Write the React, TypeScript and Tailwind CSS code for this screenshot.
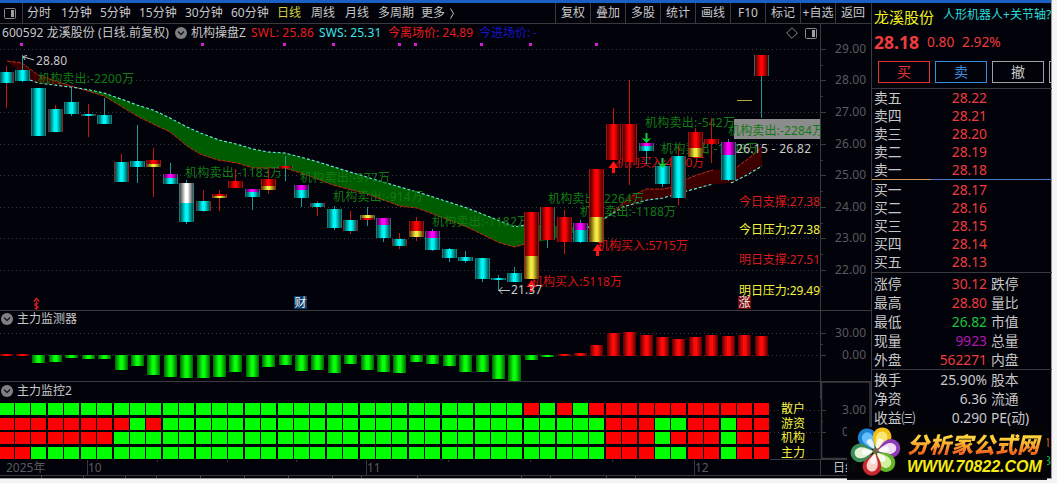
import clsx from "clsx";

type Tone = "r" | "c" | "y" | "m" | "w";
// wick top, wick bottom, wick colour, body segments [tone, top, bottom]
type Candle = [number, number, "r" | "c", [Tone, number, number][]];

const FONT = "font-['Noto_Sans','Noto_Sans_CJK_SC',sans-serif]";

const RED = "#c81414";
const TEAL = "#1e9696";
const GRID = "#3c3c40";
const LINE = "#3a3a3e";

const tones: Record<Tone, [string, string]> = {
  r: ["#4c0000", "#ff0404"],
  c: ["#004c4c", "#00f4f4"],
  y: ["#5e4c0c", "#f4e83c"],
  m: ["#4c004c", "#ff00ff"],
  w: ["#4c4c4c", "#ffffff"],
};

const candles: Candle[] = [
  [66, 108, "r", [["c", 72, 83]]],
  [55, 82, "c", [["c", 70, 81]]],
  [88, 136, "c", [["c", 88, 136]]],
  [105, 132, "r", [["c", 109, 132]]],
  [88, 116, "c", [["c", 102, 114]]],
  [104, 137, "r", [["c", 114, 116]]],
  [98, 124, "c", [["c", 115, 124]]],
  [154, 182, "r", [["c", 162, 182]]],
  [125, 183, "c", [["c", 161, 167]]],
  [148, 197, "r", [["r", 160, 164], ["y", 164, 167]]],
  [163, 184, "c", [["m", 174, 178], ["c", 178, 184]]],
  [180, 224, "c", [["w", 183, 203], ["c", 203, 222]]],
  [190, 212, "r", [["c", 201, 211]]],
  [190, 211, "r", [["r", 194, 196], ["y", 196, 198]]],
  [169, 188, "r", [["r", 181, 188]]],
  [189, 210, "c", [["m", 189, 192], ["c", 192, 197]]],
  [170, 194, "r", [["r", 179, 186], ["y", 186, 190]]],
  [156, 181, "c", [["r", 166, 168]]],
  [185, 207, "c", [["m", 185, 190], ["c", 190, 198]]],
  [201, 216, "r", [["c", 203, 207]]],
  [206, 230, "c", [["c", 209, 228]]],
  [211, 234, "r", [["c", 220, 231]]],
  [207, 226, "c", [["y", 215, 218], ["r", 218, 220]]],
  [218, 242, "c", [["m", 218, 225], ["c", 225, 238]]],
  [233, 249, "r", [["c", 239, 246]]],
  [217, 241, "r", [["r", 221, 231], ["y", 231, 237]]],
  [229, 251, "c", [["m", 231, 238], ["c", 238, 250]]],
  [248, 262, "c", [["c", 249, 258]]],
  [251, 263, "c", [["c", 257, 261]]],
  [258, 282, "c", [["c", 258, 279]]],
  [275, 291, "c", [["c", 278, 280]]],
  [267, 282, "c", [["c", 273, 282]]],
  [212, 279, "r", [["r", 212, 256], ["y", 256, 279]]],
  [207, 248, "c", [["r", 207, 240]]],
  [210, 254, "r", [["r", 217, 242]]],
  [220, 243, "c", [["m", 223, 230], ["c", 230, 242]]],
  [169, 242, "r", [["r", 169, 217], ["y", 217, 242]]],
  [108, 160, "r", [["r", 124, 160]]],
  [80, 185, "r", [["r", 124, 162]]],
  [142, 164, "c", [["m", 143, 146], ["c", 146, 151]]],
  [164, 187, "c", [["c", 166, 184]]],
  [146, 205, "r", [["c", 156, 198]]],
  [128, 157, "r", [["r", 132, 148], ["y", 148, 157]]],
  [118, 163, "r", [["r", 139, 144]]],
  [139, 181, "c", [["m", 142, 155], ["c", 155, 180]]],
  [100, 100, "r", []],
  [55, 118, "c", [["r", 55, 76]]],
];

const centerOf = (i: number) => Math.floor(6.15 + 16.41 * i) + 0.5;

const priceAxis: [string, number][] = [
  ["29.00", 49], ["28.00", 80], ["27.00", 112], ["26.00", 144],
  ["25.00", 175], ["24.00", 207], ["23.00", 238], ["22.00", 270],
];

const signalDots = [21, 202, 284, 333, 399, 415, 481, 530, 596];

const sellLabels: [number, number, string, number][] = [
  [38, 83, "-2200万", 96],
  [185, 177, "-1183万", 97],
  [300, 182, "-977万", 90],
  [333, 201, "-914万", 90],
  [432, 226, "-1182万", 97],
  [548, 203, "-2264万", 96],
  [580, 216, "-1188万", 96],
  [645, 127, "-542万", 90],
  [661, 153, "-1198万", 97],
];

const buyLabels: [number, number, string, number][] = [
  [531, 286, "5118万", 91],
  [597, 250, "5715万", 91],
  [616, 167, "4180万", 88],
];

const targets: [string, number, string][] = [
  ["今日支撑:27.38", 206, "#d81c1c"],
  ["今日压力:27.38", 234, "#f4f43c"],
  ["明日支撑:27.51", 264, "#d81c1c"],
  ["明日压力:29.49", 295, "#f4f43c"],
];

// free end of every bar: the top above zero, the bottom below it
const histogram = [
  354, 354, 363, 362, 358, 359, 359, 370, 366, 375, 377, 378, 378, 377, 372, 377,
  367, 365, 371, 370, 373, 364, 370, 372, 373, 362, 364, 366, 372, 372, 379, 381,
  360, 357, 354, 353, 345, 333, 332, 335, 337, 339, 337, 335, 336, 335, 336,
];

const heatRows: [string, number, string][] = [
  ["散户", 403, "G".repeat(32) + "RGRG" + "R".repeat(11)],
  ["游资", 418, "RRRRRRRRGR" + "G".repeat(27) + "RRRGGRRGRR"],
  ["机构", 432, "R".repeat(7) + "G".repeat(30) + "RRRGRRRGRR"],
  ["主力", 447, "RR" + "G".repeat(35) + "RRRGGRRGRR"],
];

const periods = [
  { text: "分时", width: "w-[34px]" },
  { text: "1分钟", width: "w-[39px]" },
  { text: "5分钟", width: "w-[39px]" },
  { text: "15分钟", width: "w-[46px]" },
  { text: "30分钟", width: "w-[46px]" },
  { text: "60分钟", width: "w-[46px]" },
  { text: "日线", width: "w-[34px]", active: true },
  { text: "周线", width: "w-[34px]" },
  { text: "月线", width: "w-[33px]" },
  { text: "多周期", width: "w-[43px]" },
  { text: "更多", width: "w-[28px]" },
];

const tools = ["复权", "叠加", "多股", "统计", "画线", "F10", "标记", "+自选", "返回"];

const asks = [["卖五", "28.22"], ["卖四", "28.21"], ["卖三", "28.20"], ["卖二", "28.19"], ["卖一", "28.18"]];
const bids = [["买一", "28.17"], ["买二", "28.16"], ["买三", "28.15"], ["买四", "28.14"], ["买五", "28.13"]];

const stats = [
  ["涨停", "30.12", "跌停", "text-[#ee3c3c]"],
  ["最高", "28.80", "量比", "text-[#ee3c3c]"],
  ["最低", "26.82", "市值", "text-[#1fc43c]"],
  ["现量", "9923", "总量", "text-[#b414b4]"],
  ["外盘", "562271", "内盘", "text-[#ee3c3c]"],
];
const basics = [
  ["换手", "25.90%", "股本", "text-[#c8c8c8]"],
  ["净资", "6.36", "流通", "text-[#c8c8c8]"],
  ["收益㈢", "0.290", "PE(动)", "text-[#c8c8c8]"],
];

function PanelIcon() {
  return (
    <svg width="12" height="11" viewBox="0 0 12 11" className="shrink-0">
      <rect x="0.5" y="0.5" width="11" height="10" rx="1" fill="none" stroke="#8a8a8a" />
      <rect x="7" y="2" width="3" height="7" fill="#a0a0a0" />
    </svg>
  );
}

function Chevron() {
  return (
    <svg width="12" height="12" viewBox="0 0 12 12" className="shrink-0">
      <circle cx="6" cy="6" r="6" fill="#808084" />
      <path d="M3 4.6 6 7.6 9 4.6" fill="none" stroke="#18181c" strokeWidth="1.4" />
    </svg>
  );
}

function Toolbar() {
  return (
    <div className="flex h-[21px] shrink-0 items-stretch border-b border-[#3a3a3e] text-[12px] leading-[20px] text-[#c8c8c8]">
      <div className="flex w-[23px] items-center border-r border-[#3a3a3e] pl-1">
        <PanelIcon />
      </div>
      <div className="flex flex-1 pl-1 whitespace-nowrap">
        {periods.map((p) => (
          <span key={p.text} className={clsx("shrink-0", p.width, p.active && "text-[#d2d23c]")}>
            {p.text}
          </span>
        ))}
        <svg width="6" height="20" viewBox="0 0 6 20">
          <path d="M1.500 5.500 4.500 10.500 1.500 15.500" fill="none" stroke="#c8c8c8" />
        </svg>
      </div>
      {tools.map((t) => (
        <span key={t} className="w-[35px] border-l border-[#3a3a3e] text-center whitespace-nowrap">
          {t}
        </span>
      ))}
      <span className="w-px" />
    </div>
  );
}

function Arrow({ x, y, down }: { x: number; y: number; down?: boolean }) {
  return down ? (
    <path d={`M${x - 1} ${y - 10}h2v6l4 -1l-5 5l-5 -5l4 1z`} fill="#14c83c" />
  ) : (
    <path d={`M${x} ${y}l5 7h-3.500v5h-3v-5h-3.500z`} fill="#ff1414" />
  );
}

function PriceChart() {
  return (
    <svg width="871" height="268" viewBox="0 42 871 268" className={clsx("block shrink-0 overflow-visible text-[12px]", FONT)}>
      <defs>
        {(Object.keys(tones) as Tone[]).map((t) => (
          <linearGradient key={t} id={`tone-${t}`}>
            <stop offset="0.08" stopColor={tones[t][0]} />
            <stop offset="0.43" stopColor={tones[t][1]} />
            <stop offset="0.57" stopColor={tones[t][1]} />
            <stop offset="0.92" stopColor={tones[t][0]} />
          </linearGradient>
        ))}
      </defs>

      <path d="M820.500 42V310" stroke={LINE} />
      {priceAxis.map(([label, y]) => (
        <g key={label}>
          <path d={`M0 ${y + 0.5}H820`} stroke={GRID} strokeDasharray="1 3" />
          <path d={`M821 ${y + 0.5}h5M821 ${y + 16.5}h2`} stroke={LINE} />
          <text x="835" y={y + 4} fill="#5a5a5e" textLength="31">{label}</text>
        </g>
      ))}
      {signalDots.map((x) => (
        <rect key={x} x={x - 1} y="43" width="3" height="3" fill="#d61cd6" />
      ))}

      <path d="M7 61 22 63 38 75 55 81 78 88 38 83 30 80z" fill="#3c0000" />
      <path
        d="M78 88 90 90 104 93 121 99 137 105 153 110 170 118 187 127 203 134 219 140 236 144 253 149 268 152 285 153 315 161 350 172 383 182 417 192 433 197 467 208 500 221 515 227 525 225 541 225 590 228 548 240 525 244 515 247 500 243 467 227 433 214 417 208 400 206 367 194 333 185 307 175 285 168 253 168 237 163 218 160 200 154 187 146 180 140 170 132 153 124 137 116 104 96z"
        fill="#005c00"
      />
      <path
        d="M597 225 605 219 620 206 632 196 646 189 663 189 673 187 687 179 697 175 713 170 737 167 753 155 762 147V166L747 175 731 183 713 184 687 191 663 198 647 200 623 207 607 217z"
        fill="#3c0000"
      />
      <path
        d="M7 61 22 63 38 75 55 81 78 88 104 96 137 116 153 124 170 132 180 140 187 146 200 154 218 160 237 163 253 168 285 168 307 175 333 185 367 194 400 206 417 208 433 214 467 227 500 243 515 247 525 244 M597 225 605 219 620 206 632 196 646 189 663 189 673 187 687 179 697 175 713 170 M737 167 753 155 762 147"
        fill="none"
        stroke="#c82814"
        strokeDasharray="4 1"
      />
      <path
        d="M30 80 38 83 78 88 90 90 104 93 121 99 137 105 153 110 170 118 187 127 203 134 219 140 236 144 253 149 268 152 285 153 315 161 350 172 383 182 417 192 433 197 467 208 500 221 515 227 525 225 541 225 M587 228 607 217 623 207 647 200 663 198 687 191 713 184 M731 183 747 175 762 166"
        fill="none"
        stroke="#64f0dc"
        strokeWidth="1.1"
        strokeDasharray="3 2"
      />

      {sellLabels.map(([x, y, text, w]) => (
        <text key={text} x={x} y={y} fill="#127a12" textLength={w}>{`机构卖出:${text}`}</text>
      ))}
      {buyLabels.map(([x, y, text, w]) => (
        <text key={text} x={x} y={y} fill="#d81414" textLength={w}>{`机构买入:${text}`}</text>
      ))}

      {candles.map(([high, low, wick, parts], i) => {
        const cx = centerOf(i);
        const edge = wick === "r" ? RED : TEAL;
        if (!parts.length) return <path key={i} d={`M${cx - 7.5} ${high + 0.5}h15`} stroke="#b4aa3c" />;
        const top = parts[0][1];
        const bottom = parts[parts.length - 1][2];
        return (
          <g key={i}>
            <path d={`M${cx} ${high}V${low}`} stroke={edge} />
            {parts.map(([tone, y1, y2]) => (
              <rect key={tone} x={cx - 7.5} y={y1} width="15" height={y2 - y1} fill={`url(#tone-${tone})`} />
            ))}
            <path d={`M${cx - 7} ${top}V${bottom}M${cx + 7} ${top}V${bottom}`} stroke={edge} opacity="0.7" />
          </g>
        );
      })}

      <Arrow x={531.5} y={280} />
      <Arrow x={597.5} y={244} />
      <Arrow x={613.5} y={161} />
      <Arrow x={646.5} y={143} down />
      <Arrow x={662.5} y={168} down />

      <rect x="734" y="119" width="86" height="20" fill="#8c8c8c" />
      <text x="728" y="135" fill="#127a12" textLength="96">机构卖出:-2284万</text>
      <rect x="821" y="119" width="8" height="20" fill="#02020a" />
      <text x="736" y="153" fill="#c8c8c8" textLength="75">26.15 - 26.82</text>

      <path d="M34 60 24 57M27 55.500 23 56.500 25 60" fill="none" stroke="#c8c8c8" />
      <text x="36" y="65" fill="#c8c8c8" textLength="31">28.80</text>
      <path d="M510 290.500H499M502.500 287 499 290.500 502.500 294" fill="none" stroke="#c8c8c8" />
      <text x="511" y="294" fill="#c8c8c8" textLength="31">21.37</text>

      {targets.map(([text, y, fill]) => (
        <text key={text + y} x="739" y={y} fill={fill} textLength="81">{text}</text>
      ))}

      <path d="M34 301.500 36.500 298.500 39 301.500" fill="none" stroke="#dc1e1e" strokeWidth="1.500" />
      <text x="33.500" y="308.500" fill="#dc1e1e" fontSize="9" fontWeight="700">S</text>
      <path d="M36.500 301V310" stroke="#dc1e1e" strokeWidth="0.800" />
      <rect x="294" y="296" width="13" height="13" fill="#0c3c66" />
      <text x="294.500" y="307" fill="#f0f0f0">财</text>
      <rect x="738" y="296" width="13" height="13" fill="#780808" />
      <text x="738.500" y="307" fill="#f0f0f0">涨</text>
    </svg>
  );
}

function PanelHeader({ title, tight }: { title: string; tight?: boolean }) {
  return (
    <div
      className={clsx(
        "flex h-[17px] w-[821px] shrink-0 items-center gap-1 border-r border-[#3a3a3e] pl-px text-[12px] text-[#c8c8c8]",
        tight ? "pb-px leading-[16px]" : "leading-[17px]",
      )}
    >
      <Chevron />
      <span>{title}</span>
    </div>
  );
}

function HistogramChart() {
  return (
    <svg width="871" height="53" viewBox="0 328 871 53" className={clsx("block shrink-0 overflow-visible text-[12px]", FONT)}>
      <defs>
        <linearGradient id="bar-up">
          <stop offset="0" stopColor="#580000" />
          <stop offset="0.42" stopColor="#ff0a0a" />
          <stop offset="0.58" stopColor="#ff0a0a" />
          <stop offset="1" stopColor="#580000" />
        </linearGradient>
        <linearGradient id="bar-down">
          <stop offset="0" stopColor="#006400" />
          <stop offset="0.42" stopColor="#0aff0a" />
          <stop offset="0.58" stopColor="#0aff0a" />
          <stop offset="1" stopColor="#006400" />
        </linearGradient>
      </defs>
      <path d="M0 333.500H820M0 355.500H820" stroke={GRID} strokeDasharray="1 3" />
      <path d="M820.500 328V381M821 333.500h5M821 344.500h2M821 355.500h5" stroke={LINE} fill="none" />
      <text x="835" y="337" fill="#5a5a5e" textLength="31">30.00</text>
      <text x="842" y="359" fill="#5a5a5e" textLength="24">0.00</text>
      {histogram.map((v, i) => {
        const up = v < 356;
        return (
          <rect
            key={i}
            x={centerOf(i) - 6.5}
            y={up ? v : 355}
            width="13"
            height={up ? 356 - v : v - 355}
            fill={up ? "url(#bar-up)" : "url(#bar-down)"}
          />
        );
      })}
    </svg>
  );
}

function HeatChart() {
  return (
    <svg width="871" height="79" viewBox="0 399 871 79" className={clsx("block shrink-0 overflow-visible text-[12px]", FONT)}>
      <path d="M770 410.500H820M770 432.500H820" stroke={GRID} strokeDasharray="1 3" />
      <path d="M821 410.500h5M821 421.500h2M821 432.500h5" stroke={LINE} />
      <text x="842" y="414" fill="#5a5a5e" textLength="24">3.00</text>
      <text x="842" y="436" fill="#5a5a5e" textLength="24">0.00</text>
      {heatRows.map(([label, y, cells]) => (
        <g key={label}>
          {cells.split("").map((c, i) => (
            <rect key={i} x={centerOf(i) - 7.5} y={y} width="15" height="12" fill={c === "R" ? "#ff0000" : "#00ff00"} />
          ))}
          <text x="781" y={y + 10} fill="#f4f43c">{label}</text>
        </g>
      ))}
      <path d="M821.500 382V458.500H870V382z" fill="none" stroke={LINE} strokeWidth="1.500" />
      <path d="M0 475.500H871M820.500 459V475M87.500 460V475M366.500 460V475M694.500 460V475" fill="none" stroke={LINE} />
      <path d="M157.500 460v2M227.500 460v2M296.500 460v2M448.500 460v2M530.500 460v2M612.500 460v2M770 459.500h101" stroke={LINE} />
      <path
        d="M41.500 476v2M83.500 476v2M125.500 476v2M156.500 476v2M200.500 476v2M244.500 476v2M288.500 476v2M332.500 476v2M361.500 476v2M417.500 476v2M521.500 476v2M550.500 476v2M606.500 476v2M635.500 476v2"
        stroke="#4a4a4e"
      />
      <g fill="#5a5a5e">
        <text x="6" y="472">2025年</text>
        <text x="88" y="472">10</text>
        <text x="367" y="472">11</text>
        <text x="695" y="472">12</text>
      </g>
      <text x="833" y="472" fill="#c8c8c8">日线</text>
    </svg>
  );
}

function Depth({ rows }: { rows: string[][] }) {
  return (
    <div className="flex flex-col">
      {rows.map(([label, price]) => (
        <div key={label} className="flex h-[18px] items-center pl-[2px]">
          <span className="w-[60px]">{label}</span>
          <span className="w-[53px] text-right text-[#ee3c3c]">{price}</span>
        </div>
      ))}
    </div>
  );
}

function Stats({ rows }: { rows: string[][] }) {
  return (
    <div className="flex flex-col">
      {rows.map(([label, value, next, color]) => (
        <div key={label} className="flex h-[19px] items-center pl-[2px]">
          <span className="w-[50px]">{label}</span>
          <span className={clsx("w-[63px] text-right", color)}>{value}</span>
          <span className="pl-1">{next}</span>
        </div>
      ))}
    </div>
  );
}

function QuotePanel() {
  return (
    <aside className="flex w-[180px] shrink-0 flex-col overflow-hidden text-[13.800px] leading-[18px] whitespace-nowrap text-[#c8c8c8]">
      <div className="flex h-[26px] shrink-0 gap-[9px] pl-[2px]">
        <span className="pt-[5px] text-[15px] text-[#f0f01e]">龙溪股份</span>
        <span className="pt-[3px] text-[12px] leading-[17px] text-[#28dcdc]">人形机器人+关节轴?</span>
      </div>
      <div className="flex h-[27px] shrink-0 items-center pb-px pl-[2px] text-[#ee3c3c]">
        <span className="w-[53px] text-[17.500px] font-bold">28.18</span>
        <span className="w-[35px]">0.80</span>
        <span>2.92%</span>
      </div>
      <div className="flex h-[33px] shrink-0 gap-[5px] border-b border-[#3a3a3e] pt-[5px] pl-[6px] text-center text-[14px] leading-[20px]">
        <span className="h-[22px] w-[52px] shrink-0 border border-[#e63232] text-[#e63232]">买</span>
        <span className="h-[22px] w-[52px] shrink-0 border border-[#3c8cdc] text-[#3c8cdc]">卖</span>
        <span className="h-[22px] w-[52px] shrink-0 border border-[#a0a0a0]">撤</span>
        <span className="h-[22px] w-[52px] shrink-0 border border-[#a0a0a0]" />
      </div>
      <div className="h-[90px] shrink-0">
        <Depth rows={asks} />
      </div>
      <div className="flex h-px shrink-0">
        <span className="w-[59px] bg-[#d29650]" />
        <span className="flex-1 bg-[#4678c8]" />
      </div>
      <div className="h-[93px] shrink-0 border-b border-[#3a3a3e] pt-px">
        <Depth rows={bids} />
      </div>
      <div className="h-[97px] shrink-0 border-b border-[#3a3a3e] pt-px">
        <Stats rows={stats} />
      </div>
      <Stats rows={basics} />
      <div className="flex flex-col items-end pt-[7px] pr-px text-[12px]">
        <span className="h-[18px] text-[#c85a1e]">1</span>
        <span className="text-[#14b43c]">3</span>
      </div>
    </aside>
  );
}

const petals: [number, string, string][] = [
  [-32, "#1e82d2", "#64beff"],
  [25, "#f0be14", "#fae678"],
  [80, "#8c3cb4", "#f0dcf5"],
  [138, "#64b428", "#d2f0a0"],
  [193, "#c82832", "#fad2c8"],
  [263, "#3c8c5a", "#e6f0d2"],
];

function Watermark() {
  return (
    <div className="absolute top-[427px] left-[847px] flex h-[53px] w-[200px] items-center bg-[#040406]/95">
      <svg width="60" height="53" viewBox="0 0 60 53" className="shrink-0">
        <g transform="translate(28.500 24)">
          {petals.map(([angle, outer, inner]) => (
            <g key={angle} transform={`rotate(${angle})`}>
              <path d="M0 -2C-6 -7 -10 -12 -9.200 -17C-8.500 -22 -4 -25 0 -25C4 -25 8.500 -22 9.200 -17C10 -12 6 -7 0 -2z" fill={outer} />
              <path d="M0 -2C-3 -7 -5.800 -11 -5.500 -15.500C-5 -19 -3 -21 0 -21C3 -21 5 -19 5.500 -15.500C5.800 -11 3 -7 0 -2z" fill={inner} />
              <path d="M0 -2C-2 -6 -3.200 -9 -2.800 -12C-2 -14 2 -14 2.800 -12C3.200 -9 2 -6 0 -2z" fill="#fff" opacity="0.8" />
            </g>
          ))}
          <circle r="3" fill="#6e6446" />
        </g>
      </svg>
      <div className="flex flex-col whitespace-nowrap italic">
        <span className="h-[26px] bg-linear-to-b from-[#ffd23c] from-30% to-[#f0641e] to-85% bg-clip-text pr-1 text-[22px] leading-[26px] font-black text-transparent">
          分析家公式网
        </span>
        <span className="h-[19px] font-['Liberation_Sans',sans-serif] text-[16px] leading-[19px] font-bold text-[#f5eb14]">
          WWW.70822.COM
        </span>
      </div>
    </div>
  );
}

export default function App() {
  return (
    <div className={clsx("relative h-[483px] w-[1057px] overflow-hidden bg-[#f4f4f4]", FONT)}>
      <div className="flex h-[479px] w-[1052px] flex-col border-r border-b border-[#9a9a9e] bg-[#02020a]">
        <div className="h-[3px] shrink-0 bg-[#1a5fc4]" />
        <div className="flex min-h-0 flex-1">
          <main className="flex w-[872px] shrink-0 flex-col border-r border-[#3a3a3e]">
            <Toolbar />
            <div className="flex h-[18px] w-[821px] shrink-0 items-center border-r border-[#3a3a3e] pl-[2px] text-[12px] leading-[18px] whitespace-nowrap text-[#c8c8c8]">
              <span className="w-[173px] tracking-[0.050px]">600592 龙溪股份 (日线.前复权)</span>
              <Chevron />
              <span className="w-[64px] pl-1">机构操盘Z</span>
              <span className="w-[68px] tracking-[0.200px] text-[#e61e1e]">SWL: 25.86</span>
              <span className="w-[69px] tracking-[0.100px] text-[#3ce6e6]">SWS: 25.31</span>
              <span className="w-[91px] text-[#e61e1e]">今离场价: 24.89</span>
              <span className="flex-1 text-[#1414c8]">今进场价: -</span>
              <svg width="12" height="12" viewBox="0 0 12 12" className="mr-[7px]">
                <path d="M6 0.700 11.300 6 6 11.300 0.700 6z" fill="none" stroke="#8a8a8a" />
              </svg>
              <span className="mr-[3px]">
                <PanelIcon />
              </span>
            </div>
            <PriceChart />
            <div className="h-px shrink-0 bg-[#3a3a3e]" />
            <PanelHeader title="主力监测器" tight />
            <HistogramChart />
            <div className="h-px shrink-0 bg-[#3a3a3e]" />
            <PanelHeader title="主力监控2" />
            <HeatChart />
          </main>
          <QuotePanel />
        </div>
      </div>
      <Watermark />
    </div>
  );
}
